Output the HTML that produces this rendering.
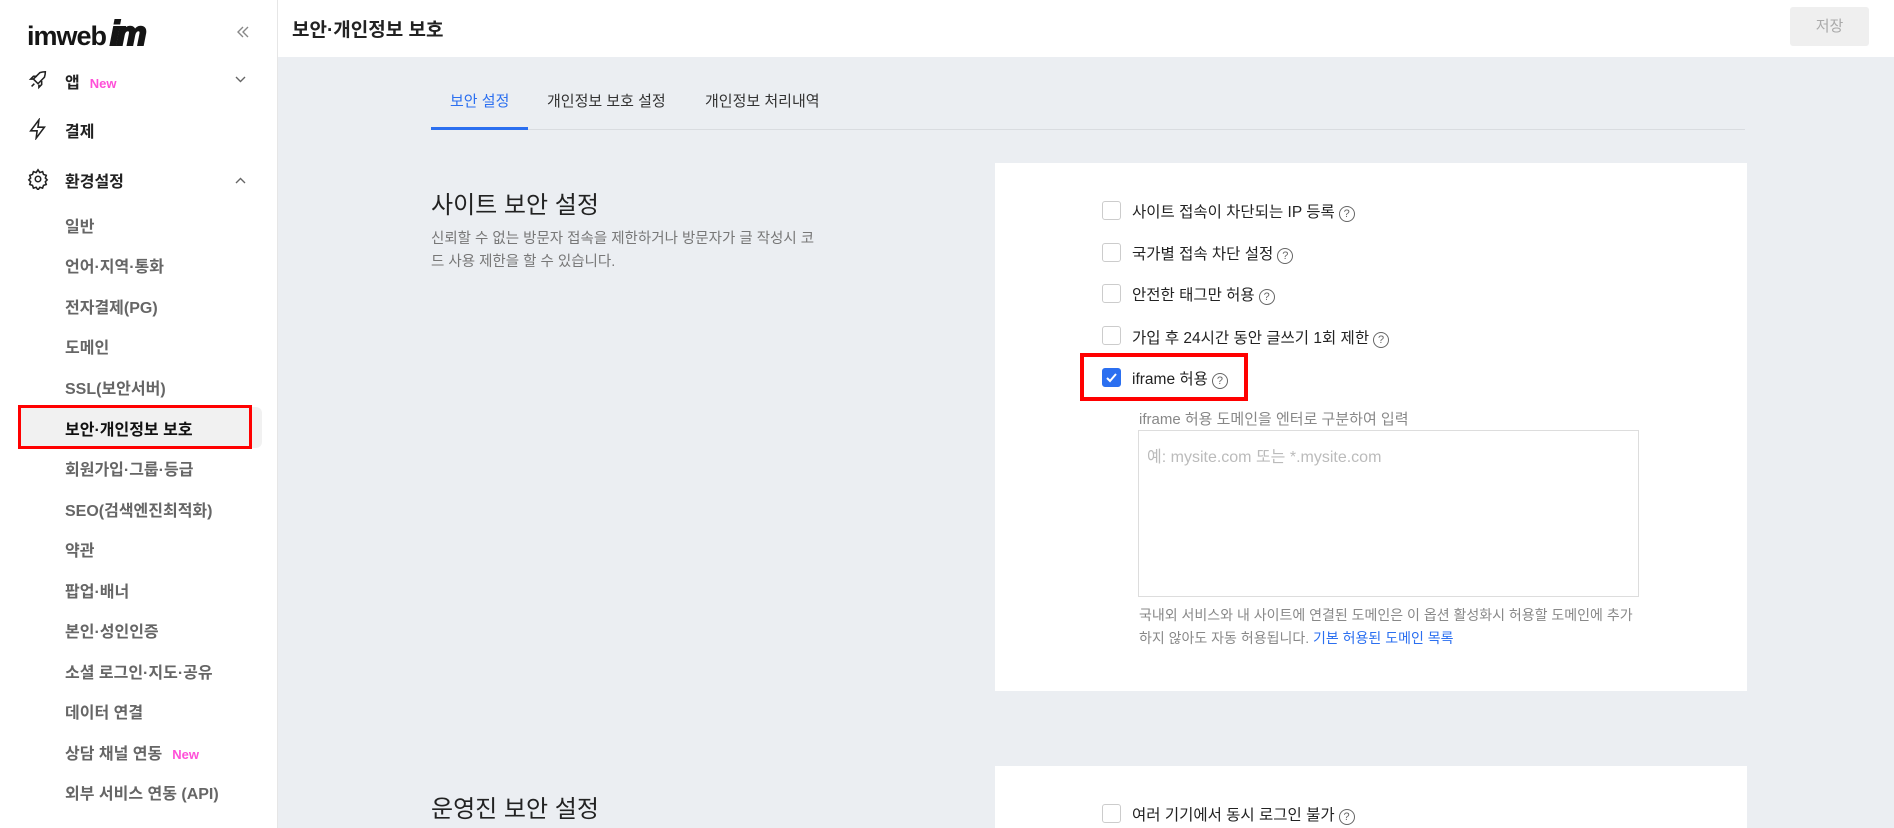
<!DOCTYPE html>
<html><head><meta charset="utf-8"><style>
*{box-sizing:border-box;margin:0;padding:0}
body{width:1894px;height:828px;overflow:hidden;background:#ebeef2;font-family:"Liberation Sans","Noto Sans CJK KR",sans-serif;position:relative;color:#222}
.a{position:absolute;white-space:nowrap}
#side{position:absolute;left:0;top:0;width:278px;height:828px;background:#fff;border-right:1px solid #e6e6e6}
.sub{position:absolute;left:65px;font-size:16px;font-weight:bold;color:#666;transform:translateY(-50%)}
.new{color:#ff4fd8;font-size:13px;font-weight:bold;margin-left:10px}
.cb{position:absolute;left:1102px;width:19px;height:19px;border:1px solid #ccc;border-radius:3px;background:#fff}
.lbl{position:absolute;left:1132px;font-size:15.5px;color:#222;transform:translateY(-50%);white-space:nowrap}
.q{display:inline-block;width:16px;height:16px;border:1.3px solid #666;border-radius:50%;font-size:11px;line-height:14px;text-align:center;color:#666;vertical-align:0px;margin-left:4px}
</style></head><body>
<div id="side">
 <div class="a" style="left:27px;top:15px;font-size:27px;font-weight:bold;letter-spacing:-1px;color:#151515">imweb<span style="font-style:italic;font-weight:900;font-size:34px;margin-left:4px;letter-spacing:-3px;-webkit-text-stroke:2px #151515">im</span></div>
 <svg class="a" style="left:236px;top:26px" width="14" height="12" viewBox="0 0 14 12" fill="none" stroke="#888" stroke-width="1.4"><path d="M7 1L2 6l5 5M12 1L7 6l5 5"/></svg>
 <svg class="a" style="left:27px;top:69px" width="22" height="22" viewBox="0 0 24 24" fill="none" stroke="#222" stroke-width="1.7"><path d="M5 19l3-3M14 4c3-1 6-1 6-1s0 3-1 6l-7 7-5-5z M7 11l-3 0 3-3 4 0 M13 17l0 3 3-3 0-4"/></svg>
 <div class="a" style="left:65px;top:69px;font-size:16px;font-weight:bold">앱<span class="new">New</span></div>
 <svg class="a" style="left:235px;top:76px" width="11" height="7" viewBox="0 0 11 7" fill="none" stroke="#666" stroke-width="1.4"><path d="M1 1l4.5 4.5L10 1"/></svg>
 <svg class="a" style="left:27px;top:118px" width="22" height="22" viewBox="0 0 24 24" fill="none" stroke="#222" stroke-width="1.7"><path d="M13 2L4 14h7l-1 8 9-12h-7z"/></svg>
 <div class="a" style="left:65px;top:118px;font-size:16px;font-weight:bold">결제</div>
 <svg class="a" style="left:27px;top:168px" width="22" height="22" viewBox="0 0 24 24" fill="none" stroke="#222" stroke-width="1.7"><circle cx="12" cy="12" r="3"/><path d="M12 2l2 3 3-1 1 3 3 1-1 3 2 2-2 2 1 3-3 1-1 3-3-1-2 3-2-3-3 1-1-3-3-1 1-3-2-2 2-2-1-3 3-1 1-3 3 1z"/></svg>
 <div class="a" style="left:65px;top:168px;font-size:16px;font-weight:bold">환경설정</div>
 <svg class="a" style="left:235px;top:177px" width="11" height="7" viewBox="0 0 11 7" fill="none" stroke="#666" stroke-width="1.4"><path d="M1 6l4.5-4.5L10 6"/></svg>
 <div class="a" style="left:18px;top:407px;width:244px;height:41px;background:#f1f1f1;border-radius:6px"></div>
 <div class="a" style="left:18px;top:405px;width:234px;height:44px;border:3px solid #f00"></div>
 <div class="sub" style="top:225px">일반</div>
 <div class="sub" style="top:265px">언어·지역·통화</div>
 <div class="sub" style="top:306px">전자결제(PG)</div>
 <div class="sub" style="top:346px">도메인</div>
 <div class="sub" style="top:387px">SSL(보안서버)</div>
 <div class="sub" style="top:428px;color:#111">보안·개인정보 보호</div>
 <div class="sub" style="top:468px">회원가입·그룹·등급</div>
 <div class="sub" style="top:509px">SEO(검색엔진최적화)</div>
 <div class="sub" style="top:549px">약관</div>
 <div class="sub" style="top:590px">팝업·배너</div>
 <div class="sub" style="top:630px">본인·성인인증</div>
 <div class="sub" style="top:671px">소셜 로그인·지도·공유</div>
 <div class="sub" style="top:711px">데이터 연결</div>
 <div class="sub" style="top:752px">상담 채널 연동<span class="new">New</span></div>
 <div class="sub" style="top:792px">외부 서비스 연동 (API)</div>
</div>
<div class="a" style="left:278px;top:0;width:1616px;height:57px;background:#fff"></div>
<div class="a" style="left:292px;top:15px;font-size:19px;font-weight:bold">보안·개인정보 보호</div>
<div class="a" style="left:1790px;top:7px;width:79px;height:39px;background:#efefef;border-radius:3px;color:#aaa;font-size:15px;text-align:center;line-height:39px">저장</div>
<div class="a" style="left:431px;top:129px;width:1314px;height:1px;background:#d9dce0"></div>
<div class="a" style="left:431px;top:127px;width:97px;height:3px;background:#2b6ff0"></div>
<div class="a" style="left:450px;top:90px;font-size:15px;color:#2b6ff0">보안 설정</div>
<div class="a" style="left:547px;top:90px;font-size:15px;color:#333">개인정보 보호 설정</div>
<div class="a" style="left:705px;top:90px;font-size:15px;color:#333">개인정보 처리내역</div>
<div class="a" style="left:431px;top:185px;font-size:24px;color:#222">사이트 보안 설정</div>
<div class="a" style="left:431px;top:228px;font-size:14.5px;color:#777;line-height:23px">신뢰할 수 없는 방문자 접속을 제한하거나 방문자가 글 작성시 코<br>드 사용 제한을 할 수 있습니다.</div>
<div class="a" style="left:995px;top:163px;width:752px;height:528px;background:#fff"></div>
<div class="cb" style="top:201px"></div><div class="lbl" style="top:211px">사이트 접속이 차단되는 IP 등록<span class="q">?</span></div>
<div class="cb" style="top:243px"></div><div class="lbl" style="top:253px">국가별 접속 차단 설정<span class="q">?</span></div>
<div class="cb" style="top:284px"></div><div class="lbl" style="top:294px">안전한 태그만 허용<span class="q">?</span></div>
<div class="cb" style="top:326px"></div><div class="lbl" style="top:337px">가입 후 24시간 동안 글쓰기 1회 제한<span class="q">?</span></div>
<div class="cb" style="top:368px;background:#2b6ff0;border-color:#2b6ff0"><svg width="17" height="17" viewBox="0 0 17 17"><path d="M4 9l3 3 6-7" fill="none" stroke="#fff" stroke-width="2"/></svg></div>
<div class="lbl" style="top:378px">iframe 허용<span class="q">?</span></div>
<div class="a" style="left:1080px;top:353px;width:168px;height:48px;border:4px solid #f00"></div>
<div class="a" style="left:1139px;top:408px;font-size:15px;color:#888">iframe 허용 도메인을 엔터로 구분하여 입력</div>
<div class="a" style="left:1138px;top:430px;width:501px;height:167px;border:1px solid #ddd;background:#fff"></div>
<div class="a" style="left:1147px;top:443px;font-size:16px;color:#bbb">예: mysite.com 또는 *.mysite.com</div>
<div class="a" style="left:1139px;top:604px;font-size:14px;color:#888;line-height:23px">국내외 서비스와 내 사이트에 연결된 도메인은 이 옵션 활성화시 허용할 도메인에 추가<br>하지 않아도 자동 허용됩니다. <span style="color:#2b6ff0">기본 허용된 도메인 목록</span></div>
<div class="a" style="left:995px;top:766px;width:752px;height:62px;background:#fff"></div>
<div class="a" style="left:431px;top:789px;font-size:24px;color:#222">운영진 보안 설정</div>
<div class="cb" style="top:804px"></div><div class="lbl" style="top:814px">여러 기기에서 동시 로그인 불가<span class="q">?</span></div>
</body></html>
